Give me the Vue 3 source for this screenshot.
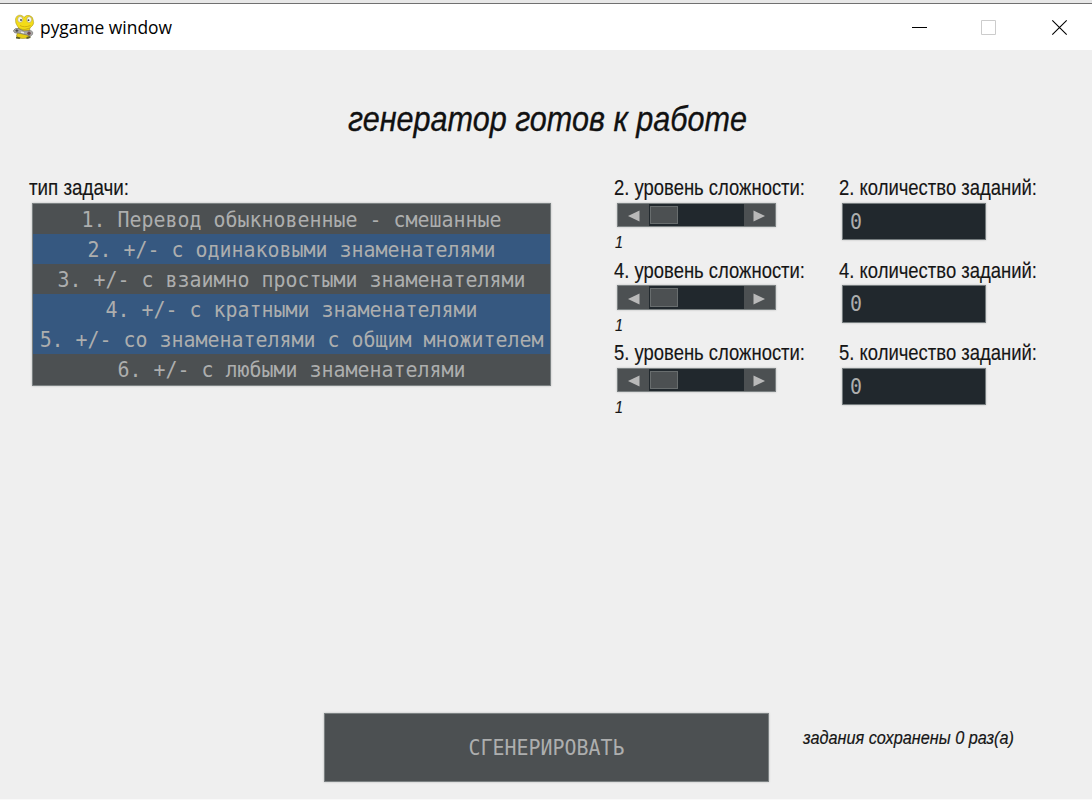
<script setup>
import { ref } from 'vue'

const types = ref([
  { text: '1. Перевод обыкновенные - смешанные', selected: false },
  { text: '2. +/- с одинаковыми знаменателями', selected: true },
  { text: '3. +/- с взаимно простыми знаменателями', selected: false },
  { text: '4. +/- с кратными знаменателями', selected: true },
  { text: '5. +/- со знаменателями с общим множителем', selected: true },
  { text: '6. +/- с любыми знаменателями', selected: false }
])
const settings = ref([
  { id: 2, level: 1, count: '0' },
  { id: 4, level: 1, count: '0' },
  { id: 5, level: 1, count: '0' }
])
</script>

<template>
  <div class="window">
    <div class="edge"></div>
    <header class="titlebar">
      <svg class="logo" width="24" height="26" viewBox="0 0 24 26">
        <path d="M7 12 L4.5 22 Q6 25 11 24.5 L17 24 L18 13Z" fill="#e6cd12" stroke="#8d7d1c" stroke-width=".5" />
        <path d="M3.5 5 Q4.5 .8 8.5 1.2 Q11 1.5 12 3.4 Q14 .8 17.5 1.5 Q21 2.5 21.2 6 Q22.2 9 21 11 Q19 14.6 13 15.4 Q7 15.6 5.6 12.5 Q3 9 3.5 5Z" fill="#f3dc18" stroke="#a08c1d" stroke-width=".5" />
        <ellipse cx="8.2" cy="5.4" rx="2.5" ry="2.9" fill="#f7f7ee" stroke="#999368" stroke-width=".5" />
        <ellipse cx="17.2" cy="5.6" rx="2.4" ry="2.9" fill="#f7f7ee" stroke="#999368" stroke-width=".5" />
        <circle cx="9" cy="6" r=".9" fill="#444" />
        <circle cx="16.5" cy="6.2" r=".9" fill="#444" />
        <path d="M8 11.5 Q12 14 18.5 11.5" fill="none" stroke="#c9a60c" stroke-width=".8" />
        <path d="M1.5 16.5 Q3 13.6 6.5 14.6 L12 17 L18 16.5 Q21.5 17 20.5 20.3 Q19 23 15 21 L6 19 Q1.5 19.5 1.5 16.5Z" fill="#aaa9a6" stroke="#666" stroke-width=".6" />
        <path d="M3.4 16.7h3M4.9 15.2v3" stroke="#444" stroke-width="1" />
        <path d="M9 18.2l3 .7" stroke="#eee" stroke-width="1.2" />
        <circle cx="17" cy="19.2" r="1.7" fill="#6e4a50" />
        <path d="M4 22.5l4.5 1-1 1.5-3.5-.6zM14.5 23l4-1 0 2-4 1z" fill="#5b5c2a" />
      </svg>
      <svg class="caption" width="134" height="46"><text x="0" y="30" textLength="132" lengthAdjust="spacingAndGlyphs">pygame window</text></svg>
      <nav class="controls">
        <svg width="16" height="16" viewBox="0 0 16 16"><path d="M1 8.5h15" stroke="#000" /></svg>
        <svg width="16" height="16" viewBox="0 0 16 16"><path d="M.5 1.5h14v14H.5z" fill="none" stroke="#ccc" /></svg>
        <svg width="16" height="16" viewBox="0 0 16 16"><path d="M.3 1.3l14.4 14.4M14.7 1.3L.3 15.7" fill="none" stroke="#000" stroke-width="1.1" /></svg>
      </nav>
    </header>
    <main>
      <h1><svg width="400" height="50"><text x="0" y="32" textLength="399" lengthAdjust="spacingAndGlyphs">генератор готов к работе</text></svg></h1>
      <div class="columns">
        <section class="types">
          <svg class="label" width="101" height="28"><text x="0" y="20" textLength="100" lengthAdjust="spacingAndGlyphs">тип задачи:</text></svg>
          <ul class="list">
            <li v-for="t in types" :key="t.text" :class="{ selected: t.selected }" @click="t.selected = !t.selected"><span class="mono">{{ t.text }}</span></li>
          </ul>
        </section>
        <section class="settings">
          <div v-for="s in settings" :key="s.id" class="setting">
            <div class="level">
              <svg class="label" width="192" height="27.9"><text x="0" y="20" textLength="191" lengthAdjust="spacingAndGlyphs">{{ s.id }}. уровень сложности:</text></svg>
              <div class="slider">
                <span class="arrow"><svg width="12" height="12"><path d="M0 6L11.5 .5v11z" fill="#b9b9b9" /></svg></span>
                <span class="track"><span class="thumb"></span></span>
                <span class="arrow right"><svg width="12" height="12"><path d="M12 6L.5 .5v11z" fill="#b9b9b9" /></svg></span>
              </div>
              <svg class="value" width="20" height="24"><text x="0" y="21" textLength="8" lengthAdjust="spacingAndGlyphs">{{ s.level }}</text></svg>
            </div>
            <div class="count">
              <svg class="label" width="199" height="27.9"><text x="0" y="20" textLength="198" lengthAdjust="spacingAndGlyphs">{{ s.id }}. количество заданий:</text></svg>
              <div class="entry"><span class="mono">{{ s.count }}</span></div>
            </div>
          </div>
        </section>
      </div>
      <footer>
        <button class="generate"><span class="mono">СГЕНЕРИРОВАТЬ</span></button>
        <svg class="status" width="212" height="30"><text x="0" y="20" textLength="211" lengthAdjust="spacingAndGlyphs">задания сохранены 0 раз(а)</text></svg>
      </footer>
    </main>
  </div>
</template>

<style>
body {
  margin: 0;
  background: #efefef;
}
</style>

<style scoped>
.window {
  width: 1092px;
  height: 800px;
  display: flex;
  flex-direction: column;
  overflow: hidden;
  background: #efefef;
  box-sizing: border-box;
  border-bottom: 1px solid #f9f9f9;
  font-family: "Liberation Sans", sans-serif;
}
svg {
  display: block;
  flex: none;
  overflow: visible;
}
.edge {
  height: 3px;
  flex: none;
  background: #e7e7e7;
  border-bottom: 1px solid #707070;
}
.titlebar {
  height: 46px;
  flex: none;
  display: flex;
  align-items: center;
  background: #fff;
  padding-left: 12px;
}
.caption {
  margin-left: 4px;
}
.caption text {
  font: 18px "Open Sans", "Noto Sans", sans-serif;
}
.controls {
  display: flex;
  align-items: center;
  gap: 54px;
  margin-left: auto;
  padding-right: 24px;
  height: 46px;
}
.controls svg + svg + svg {
  margin-left: 1px;
}
main {
  flex: 1;
  display: flex;
  flex-direction: column;
}
h1 {
  margin: 49px 0 0 348px;
  height: 76px;
}
h1 text {
  font: italic 400 35.5px "Liberation Sans", sans-serif;
  fill: #111;
  stroke: #111;
  stroke-width: 0.35px;
}
.columns {
  display: flex;
  padding-left: 29px;
}
.types {
  width: 585px;
}
.label text {
  font-size: 22px;
  fill: #151515;
  stroke: #151515;
  stroke-width: 0.15px;
}
.mono {
  display: inline-block;
  font-family: "DejaVu Sans Mono", monospace;
  font-size: 19.93px;
  color: #adaeae;
  white-space: pre;
  transform: translateY(1px) scaleY(1.06);
}
.list {
  list-style: none;
  box-sizing: border-box;
  width: 519px;
  height: 183px;
  margin: 0 0 0 3px;
  padding: 0 0 1px;
  background: #4c5052;
  border: 1px solid #7b8182;
  box-shadow: 0 0 2px #bbb;
}
.list li {
  height: 30px;
  line-height: 31px;
  text-align: center;
}
.list li.selected {
  background: #365880;
}
.setting {
  display: flex;
  height: 82.5px;
}
.level {
  width: 225px;
}
.slider {
  box-sizing: border-box;
  display: flex;
  width: 159px;
  height: 24.5px;
  margin-left: 3px;
  border: 1px solid #7b8182;
  background: #4c5052;
  box-shadow: 0 0 2px #bbb;
}
.arrow {
  width: 31px;
  display: flex;
  align-items: center;
  justify-content: center;
  padding-top: 2px;
  box-sizing: border-box;
}
.arrow.right {
  padding-right: 1px;
}
.track {
  flex: 1;
  padding: 2px 1px;
  background: #21282d;
}
.thumb {
  display: block;
  width: 28px;
  height: 18.5px;
  box-sizing: border-box;
  background: #4c5052;
  border: 1px solid #686d6e;
}
.value {
  margin-left: 1px;
}
.value text {
  font-size: 17px;
  font-style: italic;
  fill: #151515;
  stroke: #151515;
  stroke-width: 0.2px;
}
.entry {
  box-sizing: border-box;
  width: 144px;
  height: 37.6px;
  margin-left: 3px;
  padding-left: 7px;
  line-height: 35px;
  background: #21282d;
  border: 1px solid #747b7d;
  box-shadow: 0 0 2px #bbb;
}
footer {
  display: flex;
  margin-top: auto;
  padding: 0 0 17px 324px;
}
.generate {
  width: 445px;
  height: 69px;
  padding: 0;
  border: 1px solid #7b8182;
  border-radius: 0;
  background: #4c5052;
  box-shadow: 0 0 2px #bbb;
}
.status {
  margin: 11px 0 0 34px;
}
.status text {
  font-size: 19px;
  font-style: italic;
  fill: #151515;
  stroke: #151515;
  stroke-width: 0.2px;
}
</style>
